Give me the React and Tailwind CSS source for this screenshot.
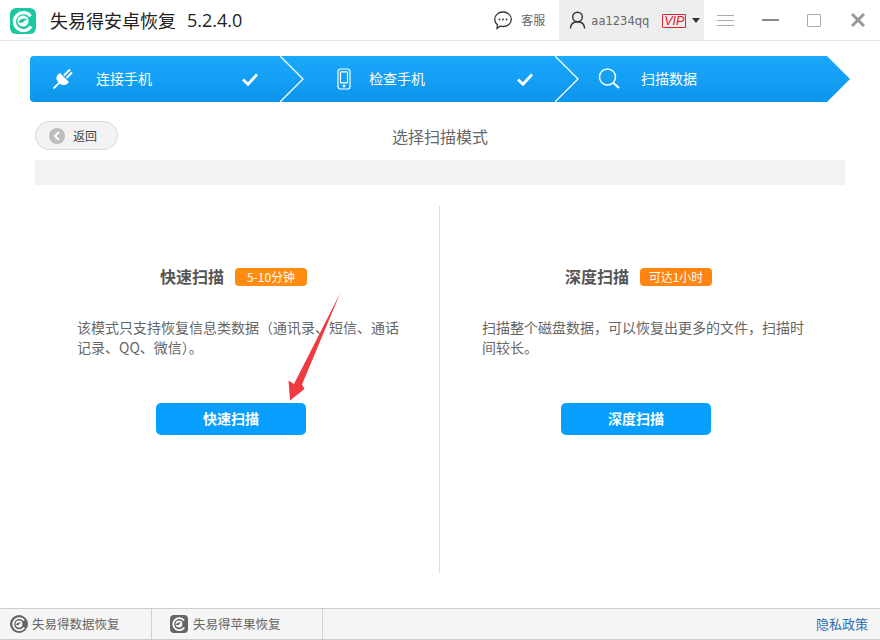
const cjk = "font-['Noto_Sans_CJK_SC','Liberation_Sans',sans-serif]";

const Logo = () => (
  <svg width="26" height="26" viewBox="0 0 26 26">
    <rect width="26" height="26" rx="6" fill="#1cc8a4" />
    <path d="M20.600 8.200A9 9 0 1 0 21 18.400" fill="none" stroke="#fff" strokeWidth="3.200" />
    <circle cx="13" cy="13" r="5.600" fill="#fff" />
    <path d="M8.400 14c2-3.200 5.600-4.200 9-2.800-2.200 0-3 2.400-4.800 3.400-1.600.8-3.200.4-4.200-.6z" fill="#1cc8a4" />
  </svg>
);

const PlugIcon = () => (
  <svg width="24" height="24" viewBox="0 0 24 24">
    <path d="M9 6l9 9-1.500 1.500a5.500 5.500 0 0 1-7.800 0l-1.700-1.700a5.500 5.500 0 0 1 0-7.300z" fill="#fff" />
    <path d="M13 8.500l6-6M15.500 11l5.500-5.500" stroke="#fff" strokeWidth="2" fill="none" />
    <path d="M8.500 15.500L2.500 21.500" stroke="#fff" strokeWidth="1.800" fill="none" />
  </svg>
);

const PhoneIcon = () => (
  <svg width="14" height="22" viewBox="0 0 14 22" fill="none" stroke="#fff" strokeWidth="1.200">
    <rect x="1" y="1" width="12" height="20" rx="2.500" />
    <rect x="3.500" y="3.800" width="7" height="11" rx=".5" />
    <circle cx="7" cy="18" r=".8" fill="#fff" />
  </svg>
);

const SearchIcon = () => (
  <svg width="22" height="22" viewBox="0 0 22 22" fill="none" stroke="#fff" strokeWidth="1.500">
    <circle cx="9.500" cy="9" r="8" />
    <path d="M15.500 15l5.500 5" strokeWidth="2" />
  </svg>
);

const Check = () => (
  <svg width="16" height="13" viewBox="0 0 16 13" fill="none" stroke="#fff" strokeWidth="2.800">
    <path d="M1 6.500l5 4.800L15 1.500" />
  </svg>
);

const Chevron = () => (
  <svg width="25" height="46" viewBox="0 0 25 46" fill="none" stroke="#fff" strokeWidth="1.300">
    <path d="M0 0l23 23L0 46" />
  </svg>
);

const SmallLogo = ({ square }) => (
  <svg width="18" height="18" viewBox="0 0 18 18">
    {square ? <rect width="18" height="18" rx="4" fill="#666" /> : <circle cx="9" cy="9" r="9" fill="#666" />}
    <path d="M14 5.500A6 6 0 1 0 14.300 12.500" fill="none" stroke="#fff" strokeWidth="1.800" />
    <circle cx="9" cy="9" r="3.400" fill="#fff" />
    <path d="M5.800 9.500c1.400-2 3.600-2.600 5.800-1.700-1.400 0-2 1.500-3 2.100-1 .5-2 .3-2.800-.4z" fill="#666" />
  </svg>
);

const Mode = ({ title, badge, badgeColor, text }) => (
  <div className="w-[405px] flex flex-col">
    <div className="flex items-center h-[18px] pl-[125px]">
      <span className="text-base font-bold text-[#555] leading-[18px] mb-[3px]">{title}</span>
      <span className={`ml-[11px] w-[72px] h-[18px] rounded-[4px] text-white text-xs leading-[18px] text-center ${badgeColor}`}>{badge}</span>
    </div>
    <p className="mt-[31px] ml-[42px] w-[325px] text-sm leading-[20px] text-[#666]">{text}</p>
    <div className="mt-[46px] pl-[121px]">
      <button className="w-[150px] h-[32px] rounded-[5px] bg-[#069ffe] text-white text-sm font-bold pb-[2px]">{title}</button>
    </div>
  </div>
);

export default function App() {
  return (
    <div className={`relative w-[880px] h-[640px] overflow-hidden bg-white flex flex-col ${cjk}`}>
      {/* Title bar */}
      <div className="h-[41px] shrink-0 border-b border-[#e4e4e4] flex items-center">
        <div className="ml-[10px] mt-[1px]"><Logo /></div>
        <span className="ml-[14px] text-lg text-[#222]">失易得安卓恢复</span>
        <span className="ml-[11px] text-lg text-[#222] font-['Open_Sans',sans-serif]">5.2.4.0</span>

        <svg className="ml-[251px]" width="20" height="20" viewBox="0 0 20 20" fill="none" stroke="#333" strokeWidth="1.300">
          <path d="M10 2c4.700 0 8.300 3.200 8.300 7.300s-3.600 7.200-8.300 7.200c-1 0-1.900-.1-2.800-.4L4 18.300l.5-3.600C2.800 13.400 1.700 11.500 1.700 9.300 1.700 5.200 5.300 2 10 2z" />
          <circle cx="6.500" cy="9.500" r=".9" fill="#333" stroke="none" />
          <circle cx="10" cy="9.500" r=".9" fill="#333" stroke="none" />
          <circle cx="13.500" cy="9.500" r=".9" fill="#333" stroke="none" />
        </svg>
        <span className="ml-[8px] w-[25px] text-xs text-[#666] whitespace-nowrap">客服</span>

        <div className="ml-[13px] w-[145px] h-[40px] bg-[#eeeeee] flex items-center">
          <svg className="ml-[10px]" width="17" height="18" viewBox="0 0 17 18" fill="none" stroke="#333" strokeWidth="1.400">
            <circle cx="8.500" cy="6" r="4.800" />
            <path d="M1.300 17.500c.4-4.300 3.300-6.700 7.200-6.700s6.800 2.400 7.200 6.700" />
          </svg>
          <span className="ml-[5px] w-[60px] text-[11.5px] text-[#666] font-['DejaVu_Sans',sans-serif] pt-[4px]">aa1234qq</span>
          <span className="ml-[11px] mt-[1px] w-[24px] h-[14px] border border-[#e0202a] rounded-[1px] text-[#e0202a] text-[12.5px] italic leading-[12px] text-center font-['Liberation_Sans',sans-serif]">VIP</span>
          <span className="ml-[6px] w-0 h-0 border-x-[4px] border-x-transparent border-t-[5px] border-t-[#333]" />
        </div>

        <div className="ml-[13px] w-[17px] flex flex-col gap-[4px]">
          <span className="h-px bg-[#aaa]" />
          <span className="h-px bg-[#aaa]" />
          <span className="h-px bg-[#aaa]" />
        </div>
        <span className="ml-[28px] w-[17px] h-[2px] bg-[#888]" />
        <span className="ml-[28px] w-[14px] h-[13px] border border-[#aaa] rounded-[1px]" />
        <svg className="ml-[30px]" width="14" height="14" viewBox="0 0 14 14" stroke="#999" strokeWidth="3">
          <path d="M1 1l12 12M13 1L1 13" />
        </svg>
      </div>

      {/* Steps */}
      <div className="mt-[15px] ml-[30px] w-[820px] h-[46px] shrink-0 flex items-center text-sm text-white bg-gradient-to-b from-[#1ba9fb] to-[#0a95ec] rounded-l-[4px] [clip-path:polygon(0_0,797px_0,820px_23px,797px_46px,0_46px)]">
        <div className="w-[250px] flex items-center">
          <div className="ml-[21px] w-[24px]"><PlugIcon /></div>
          <span className="ml-[21px] w-[56px] pb-[2px]">连接手机</span>
          <div className="ml-[90px]"><Check /></div>
        </div>
        <Chevron />
        <div className="w-[250px] flex items-center">
          <div className="ml-[32px]"><PhoneIcon /></div>
          <span className="ml-[18px] w-[56px] pb-[2px]">检查手机</span>
          <div className="ml-[92px]"><Check /></div>
        </div>
        <Chevron />
        <div className="flex items-center">
          <div className="ml-[18px]"><SearchIcon /></div>
          <span className="ml-[21px] pb-[2px]">扫描数据</span>
        </div>
      </div>

      {/* Toolbar */}
      <div className="mt-[19px] mx-[35px] h-[30px] shrink-0 relative flex items-center justify-center">
        <button className="absolute left-0 top-0 w-[83px] h-[29px] rounded-full bg-[#f3f3f3] border border-[#d8d8d8] flex items-center">
          <span className="ml-[13px] w-[16px] h-[16px] rounded-full bg-[#bdbdbd] flex items-center justify-center">
            <svg width="8" height="10" viewBox="0 0 8 10" fill="none" stroke="#fff" strokeWidth="2"><path d="M6 1L2 5l4 4" /></svg>
          </span>
          <span className="ml-[8px] text-xs text-[#444]">返回</span>
        </button>
        <span className="text-base text-[#666]">选择扫描模式</span>
      </div>
      <div className="mt-[9px] mx-[35px] h-[25px] shrink-0 bg-[#f2f2f2]" />

      {/* Modes */}
      <div className="mt-[21px] mx-[35px] h-[367px] shrink-0 flex relative">
        <div className="pt-[62px] flex">
          <Mode
            title="快速扫描"
            badge="5-10分钟"
            badgeColor="bg-[#ff8c10]"
            text="该模式只支持恢复信息类数据（通讯录、短信、通话记录、QQ、微信）。"
          />
          <Mode
            title="深度扫描"
            badge="可达1小时"
            badgeColor="bg-[#ff8410]"
            text="扫描整个磁盘数据，可以恢复出更多的文件，扫描时间较长。"
          />
        </div>
        <div className="absolute left-[404px] top-0 bottom-0 w-px bg-[#dddddd]" />
      </div>

      {/* Footer */}
      <div className="mt-[35px] h-[32px] shrink-0 bg-[#f5f5f5] border-t border-b border-[#cccccc] flex items-center text-[12.5px] text-[#666]">
        <div className="w-[152px] h-full border-r border-[#d0d0d0] flex items-center pl-[10px]">
          <SmallLogo />
          <span className="ml-[4px]">失易得数据恢复</span>
        </div>
        <div className="w-[171px] h-full border-r border-[#d0d0d0] flex items-center pl-[18px]">
          <SmallLogo square />
          <span className="ml-[5px]">失易得苹果恢复</span>
        </div>
        <span className="ml-auto mr-[12px] text-[13px] text-[#2a6db5]">隐私政策</span>
      </div>

      {/* Red annotation arrow */}
      <svg className="absolute left-[285px] top-[290px]" width="60" height="115" viewBox="285 290 60 115">
        <path d="M340.500 292.500L302 384.500 304.500 389 290 400.500 288.500 380.500 294 384z" fill="#ee3a40" />
      </svg>
    </div>
  );
}
